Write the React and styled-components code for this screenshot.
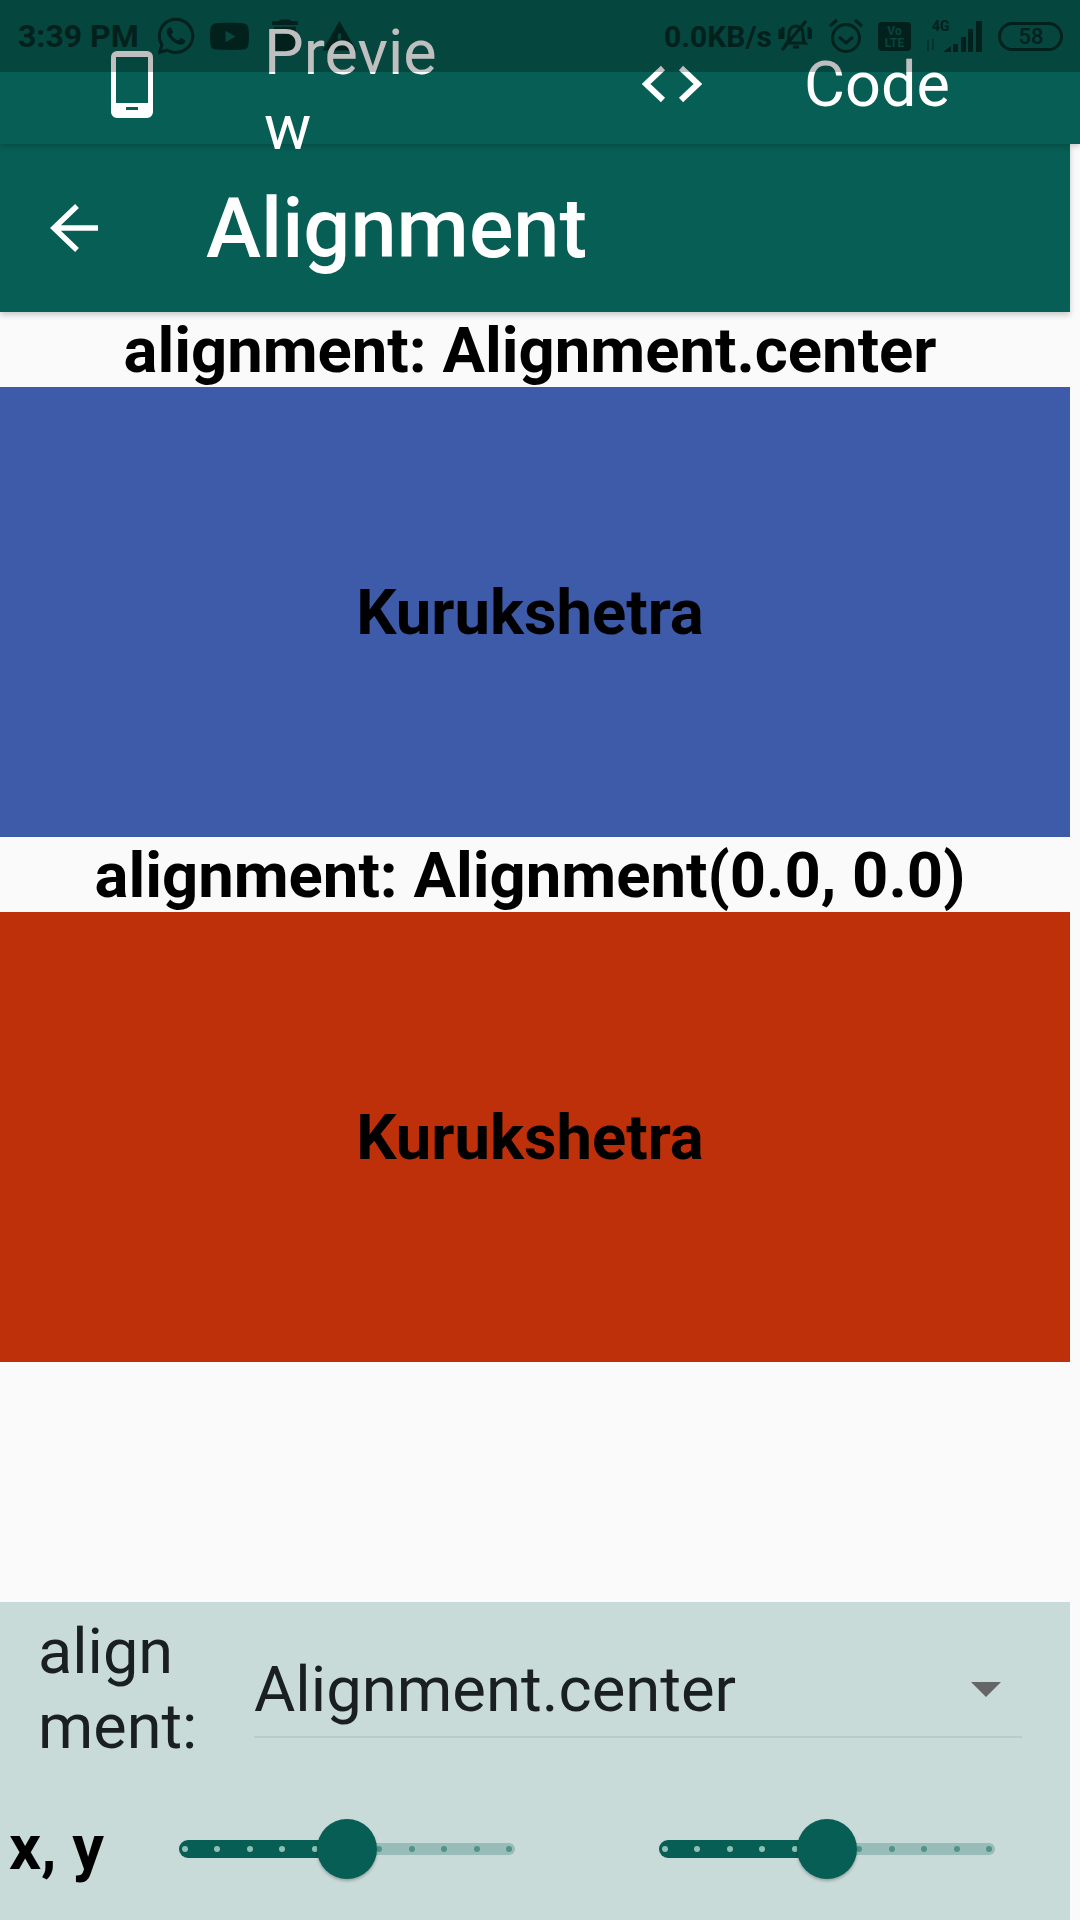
import React from 'react';
import styled, { createGlobalStyle } from 'styled-components';
import { FaWhatsapp, FaYoutube } from 'react-icons/fa';
import { MdDelete, MdWarning } from 'react-icons/md';

const GlobalStyle = createGlobalStyle`
  html, body {
    margin: 0;
    padding: 0;
    background: #fafafa;
    font-family: Roboto, "Liberation Sans", sans-serif;
  }
`;

const green = '#075e54';

const Page = styled.div`
  width: 1080px;
  height: 1920px;
  overflow: hidden;
  display: flex;
  flex-direction: column;
  background: #fafafa;
`;

const TabHeader = styled.div`
  position: relative;
  height: 144px;
  flex: none;
  background: ${green};
  box-shadow: 0 2px 6px rgba(0, 0, 0, 0.22);
  z-index: 3;
`;

const Scrim = styled.div`
  position: absolute;
  top: 0;
  left: 0;
  right: 0;
  height: 72px;
  background: rgba(0, 0, 0, 0.25);
  z-index: 2;
`;

const StatusBar = styled.div`
  position: absolute;
  top: 0;
  left: 0;
  right: 0;
  height: 72px;
  display: flex;
  align-items: center;
  justify-content: space-between;
  padding: 0 17px 0 18px;
  color: #032b26;
  font-weight: 700;
  font-size: 30px;
`;

const StatusSide = styled.div`
  display: flex;
  align-items: center;
`;

const StatusItem = styled.span`
  display: flex;
  align-items: center;
  margin-right: ${(p) => p.$gap || 0}px;
`;

const Clock = styled(StatusItem)`
  font-size: 32px;
`;

const Tabs = styled.div`
  position: relative;
  z-index: 1;
  display: flex;
  height: 120px;
  padding-top: 24px;
`;

const Tab = styled.div`
  width: 540px;
  display: flex;
  align-items: center;
  color: #fff;
`;

const TabIcon = styled.div`
  width: 264px;
  flex: none;
  display: flex;
  justify-content: center;
`;

const TabLabel = styled.div`
  font-size: 63px;
  line-height: 75px;
  width: 190px;
  word-break: break-all;
  margin-top: ${(p) => p.$shift || 0}px;
`;

const AppBar = styled.header`
  width: 1070px;
  height: 168px;
  flex: none;
  display: flex;
  align-items: center;
  background: ${green};
  color: #fff;
  box-shadow: 0 3px 6px rgba(0, 0, 0, 0.2);
  position: relative;
  z-index: 2;
`;

const BackButton = styled.div`
  width: 206px;
  flex: none;
  display: flex;
  padding-left: 50px;
  box-sizing: border-box;
`;

const Title = styled.h1`
  margin: 0;
  font-size: 83px;
  font-weight: 500;
`;

const Content = styled.main`
  width: 1070px;
  flex: 1;
  display: flex;
  flex-direction: column;
`;

const Caption = styled.div`
  height: 75px;
  display: flex;
  align-items: center;
  justify-content: center;
  padding-right: 10px;
  font-size: 63.4px;
  font-weight: 700;
  color: #000;
`;

const DemoBox = styled.div`
  height: 450px;
  display: flex;
  align-items: center;
  justify-content: center;
  padding-right: 10px;
  background: ${(p) => p.$color};
  font-size: 63.4px;
  font-weight: 700;
  color: #000;
`;

const Controls = styled.section`
  margin-top: auto;
  height: 318px;
  background: #c8dbd8;
  display: flex;
  flex-direction: column;
`;

const DropdownRow = styled.div`
  display: flex;
  align-items: flex-start;
  padding: 12px 48px 0 38px;
`;

const DropdownLabel = styled.div`
  width: 216px;
  flex: none;
  font-size: 63px;
  line-height: 75px;
  color: #1a1f1f;
`;

const Dropdown = styled.div`
  flex: 1;
  height: 96px;
  margin-top: 28px;
  box-sizing: border-box;
  border-bottom: 2px solid #bccac8;
  display: flex;
  align-items: center;
  justify-content: space-between;
  font-size: 63.4px;
  color: #1a1f1f;
  padding-right: 21px;
`;

const Caret = styled.div`
  width: 0;
  height: 0;
  border-left: 15px solid transparent;
  border-right: 15px solid transparent;
  border-top: 15px solid #666;
`;

const SliderRow = styled.div`
  display: flex;
  align-items: center;
  margin-top: auto;
  padding: 0 0 36px 9px;
`;

const SliderLabel = styled.div`
  width: 170px;
  flex: none;
  font-size: 63px;
  font-weight: 700;
  color: #000;
  margin-top: -3px;
`;

const Slider = styled.div`
  position: relative;
  width: 336px;
  height: 60px;
  flex: none;
  display: flex;
  align-items: center;
  margin-right: 144px;
`;

const ActiveTrack = styled.div`
  width: 168px;
  height: 18px;
  background: ${green};
  border-radius: 9px 0 0 9px;
`;

const InactiveTrack = styled.div`
  flex: 1;
  height: 12px;
  background: #98bdb8;
  border-radius: 0 6px 6px 0;
`;

const Dots = styled.div`
  position: absolute;
  inset: 0 3px;
  display: flex;
  align-items: center;
  justify-content: space-between;
`;

const Dot = styled.span`
  width: 6px;
  height: 6px;
  border-radius: 50%;
  background: ${(p) => (p.$active ? '#8fc0b8' : '#4f9389')};
`;

const Thumb = styled.div`
  position: absolute;
  left: 138px;
  top: 0;
  width: 60px;
  height: 60px;
  border-radius: 50%;
  background: ${green};
  box-shadow: 0 2px 3px rgba(0, 0, 0, 0.25);
`;

const PhoneIcon = () => (
  <svg width="42" height="67" viewBox="0 0 42 67">
    <path
      fill="#fff"
      fillRule="evenodd"
      d="M6 0h30a6 6 0 0 1 6 6v55a6 6 0 0 1-6 6H6a6 6 0 0 1-6-6V6a6 6 0 0 1 6-6zM5 6v46h32V6zM15 56v3h12v-3z"
    />
  </svg>
);

const CodeIcon = () => (
  <svg width="60" height="38" viewBox="0 0 60 38">
    <path d="M21 3L4 19l17 16M39 3l17 16-17 16" fill="none" stroke="#fff" strokeWidth="6" />
  </svg>
);

const BackIcon = () => (
  <svg width="48" height="50" viewBox="0 0 48 50">
    <path d="M48 25H4M27 3L4 25l23 22" fill="none" stroke="#fff" strokeWidth="5.5" />
  </svg>
);

const MuteIcon = () => (
  <svg width="34" height="34" viewBox="0 0 34 34">
    <path
      d="M9 24c2-2 2-5 2-9 0-5 3-8 7-8s7 3 7 8c0 4 0 7 2 9zM15 28h6M2 10v10M5 8v12M31 8v12M34 10v10M4 31L28 2"
      fill="none"
      stroke="currentColor"
      strokeWidth="3"
    />
  </svg>
);

const AlarmIcon = () => (
  <svg width="34" height="36" viewBox="0 0 34 36">
    <circle cx="17" cy="20" r="13.5" fill="none" stroke="currentColor" strokeWidth="3" />
    <path d="M10 19l7 6 7-6M1 8l7-6M33 8l-7-6" fill="none" stroke="currentColor" strokeWidth="3" />
  </svg>
);

const VolteIcon = () => (
  <svg width="33" height="29" viewBox="0 0 33 29">
    <rect width="33" height="29" rx="4" fill="currentColor" />
    <text x="16.5" y="13" fontSize="12" fontWeight="700" textAnchor="middle" fill={green} fontFamily="Roboto">Vo</text>
    <text x="16.5" y="25" fontSize="12" fontWeight="700" textAnchor="middle" fill={green} fontFamily="Roboto">LTE</text>
  </svg>
);

const SignalIcon = () => (
  <svg width="58" height="34" viewBox="0 0 58 34">
    <text x="7" y="12" fontSize="14" fontWeight="700" fill="currentColor" fontFamily="Roboto">4G</text>
    <path d="M3 21v11M8 20v11" fill="none" stroke="currentColor" strokeWidth="2" opacity="0.5" />
    <path d="M18 33l8-6v6zM28 25h5v8h-5zM36 18h5v15h-5zM43 10h5v23h-5zM51 2h6v31h-6z" fill="currentColor" />
  </svg>
);

const BatteryIcon = () => (
  <svg width="65" height="29" viewBox="0 0 65 29">
    <rect x="1.5" y="1.5" width="62" height="26" rx="13" fill="none" stroke="currentColor" strokeWidth="3" />
    <text x="33" y="22" fontSize="22" fontWeight="500" textAnchor="middle" fill="currentColor" fontFamily="Roboto">58</text>
  </svg>
);

const ValueSlider = () => (
  <Slider>
    <ActiveTrack />
    <InactiveTrack />
    <Dots>
      {Array.from({ length: 11 }, (_, i) => (
        <Dot key={i} $active={i < 5} />
      ))}
    </Dots>
    <Thumb />
  </Slider>
);

const App = () => (
  <Page>
    <GlobalStyle />
    <TabHeader>
      <StatusBar>
        <StatusSide>
          <Clock $gap={16}>3:39 PM</Clock>
          <StatusItem $gap={12}><FaWhatsapp size={42} /></StatusItem>
          <StatusItem $gap={13}><FaYoutube size={41} /></StatusItem>
          <StatusItem $gap={14}><MdDelete size={44} /></StatusItem>
          <StatusItem><MdWarning size={37} /></StatusItem>
        </StatusSide>
        <StatusSide>
          <StatusItem $gap={6}>0.0KB/s</StatusItem>
          <StatusItem $gap={17}><MuteIcon /></StatusItem>
          <StatusItem $gap={15}><AlarmIcon /></StatusItem>
          <StatusItem $gap={14}><VolteIcon /></StatusItem>
          <StatusItem $gap={15}><SignalIcon /></StatusItem>
          <StatusItem><BatteryIcon /></StatusItem>
        </StatusSide>
      </StatusBar>
      <Tabs>
        <Tab>
          <TabIcon>
            <PhoneIcon />
          </TabIcon>
          <TabLabel $shift={11}>Preview</TabLabel>
        </Tab>
        <Tab>
          <TabIcon>
            <CodeIcon />
          </TabIcon>
          <TabLabel>Code</TabLabel>
        </Tab>
      </Tabs>
      <Scrim />
    </TabHeader>
    <AppBar>
      <BackButton>
        <BackIcon />
      </BackButton>
      <Title>Alignment</Title>
    </AppBar>
    <Content>
      <Caption>alignment: Alignment.center</Caption>
      <DemoBox $color="#3d5ba9">Kurukshetra</DemoBox>
      <Caption>alignment: Alignment(0.0, 0.0)</Caption>
      <DemoBox $color="#bd300a">Kurukshetra</DemoBox>
      <Controls>
        <DropdownRow>
          <DropdownLabel>
            align
            <br />
            ment:
          </DropdownLabel>
          <Dropdown>
            Alignment.center
            <Caret />
          </Dropdown>
        </DropdownRow>
        <SliderRow>
          <SliderLabel>x, y</SliderLabel>
          <ValueSlider />
          <ValueSlider />
        </SliderRow>
      </Controls>
    </Content>
  </Page>
);

export default App;
